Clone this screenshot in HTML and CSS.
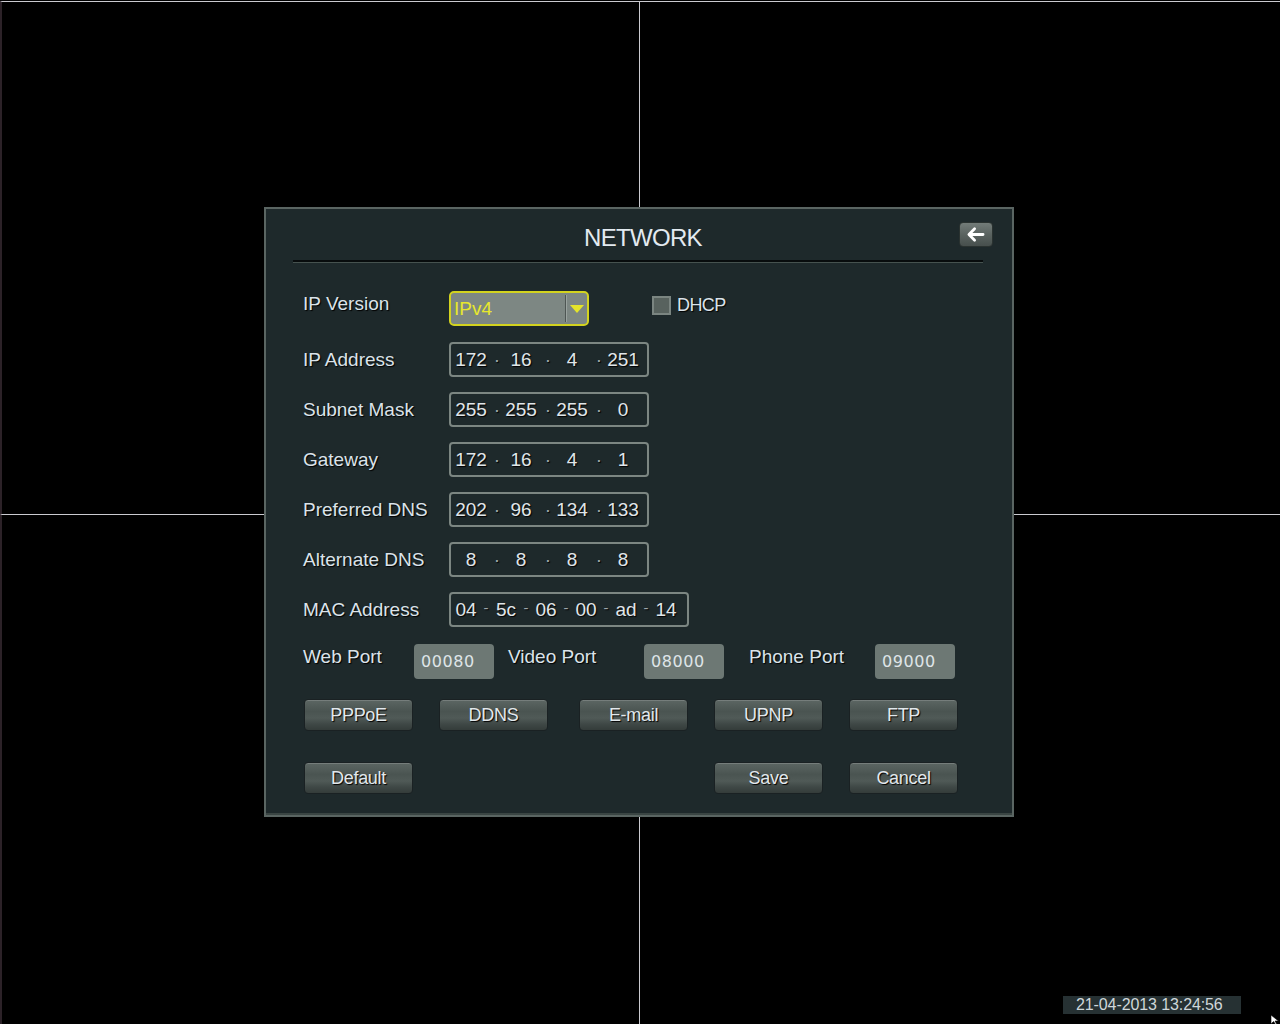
FILE: index.html
```html
<!DOCTYPE html>
<html>
<head>
<meta charset="utf-8">
<title>Network</title>
<link rel="stylesheet" href="styles.css">
</head>
<body>
<div class="screen">
  <div class="cell cell-left"></div>
  <div class="cell"></div>
  <div class="cell cell-left"></div>
  <div class="cell"></div>
</div>

<div class="dialog">
  <div class="dlg-head">
    <span></span>
    <h1 class="dlg-title">NETWORK</h1>
    <button class="back-btn" type="button">
      <svg width="34" height="25" viewBox="0 0 34 25"><path d="M15.5 6.5 L9.5 12.5 L15.5 18.5 M10 12.5 H24.5" fill="none" stroke="#ffffff" stroke-width="3" stroke-linejoin="round" stroke-linecap="round"/></svg>
    </button>
  </div>
  <div class="dlg-sep"></div>
  <div class="dlg-body">
    <div class="form">
      <div class="row row-top">
        <span class="label">IP Version</span>
        <div class="select">
          <span class="select-val">IPv4</span>
          <span class="select-arrow"><svg width="14" height="8" viewBox="0 0 14 8"><path d="M0 0 H14 L7 8 Z" fill="#e4e42a"/></svg></span>
        </div>
        <div class="check"><span class="check-box"></span><span class="check-text">DHCP</span></div>
      </div>
      <div class="row">
        <span class="label">IP Address</span>
        <div class="ipbox"><span class="seg seg-first">172</span><span class="dot">·</span><span class="seg">16</span><span class="dot">·</span><span class="seg">4</span><span class="dot">·</span><span class="seg">251</span></div>
      </div>
      <div class="row">
        <span class="label">Subnet Mask</span>
        <div class="ipbox"><span class="seg seg-first">255</span><span class="dot">·</span><span class="seg">255</span><span class="dot">·</span><span class="seg">255</span><span class="dot">·</span><span class="seg">0</span></div>
      </div>
      <div class="row">
        <span class="label">Gateway</span>
        <div class="ipbox"><span class="seg seg-first">172</span><span class="dot">·</span><span class="seg">16</span><span class="dot">·</span><span class="seg">4</span><span class="dot">·</span><span class="seg">1</span></div>
      </div>
      <div class="row">
        <span class="label">Preferred DNS</span>
        <div class="ipbox"><span class="seg seg-first">202</span><span class="dot">·</span><span class="seg">96</span><span class="dot">·</span><span class="seg">134</span><span class="dot">·</span><span class="seg">133</span></div>
      </div>
      <div class="row">
        <span class="label">Alternate DNS</span>
        <div class="ipbox"><span class="seg seg-first">8</span><span class="dot">·</span><span class="seg">8</span><span class="dot">·</span><span class="seg">8</span><span class="dot">·</span><span class="seg">8</span></div>
      </div>
      <div class="row">
        <span class="label">MAC Address</span>
        <div class="ipbox macbox"><span class="mseg">04</span><span class="dash">-</span><span class="mseg">5c</span><span class="dash">-</span><span class="mseg">06</span><span class="dash">-</span><span class="mseg">00</span><span class="dash">-</span><span class="mseg">ad</span><span class="dash">-</span><span class="mseg">14</span></div>
      </div>
    </div>

    <div class="ports">
      <span class="plabel plabel-web">Web Port</span>
      <span class="pinput">00080</span>
      <span class="plabel plabel-video">Video Port</span>
      <span class="pinput">08000</span>
      <span class="plabel plabel-phone">Phone Port</span>
      <span class="pinput">09000</span>
    </div>

    <div class="btn-row">
      <button class="btn" type="button">PPPoE</button>
      <button class="btn btn-ddns" type="button">DDNS</button>
      <button class="btn btn-email" type="button">E-mail</button>
      <button class="btn btn-gap" type="button">UPNP</button>
      <button class="btn btn-gap" type="button">FTP</button>
    </div>

    <div class="btn-row btn-row-bottom">
      <button class="btn" type="button">Default</button>
      <button class="btn btn-save" type="button">Save</button>
      <button class="btn btn-gap" type="button">Cancel</button>
    </div>
  </div>
</div>

<div class="clock">21-04-2013 13:24:56</div>
<svg class="cursor" width="10" height="10" viewBox="0 0 10 10"><path d="M0 0 L0 9 L2.5 6.5 L5 10 L6 9.5 L4 6 L7.5 6 Z" fill="#ffffff" stroke="#000" stroke-width="0.6"/></svg>
</body>
</html>
```

FILE: styles.css
```css
html, body {
  margin: 0;
  padding: 0;
}

body {
  background: #000;
  width: 1280px;
  height: 1024px;
  overflow: hidden;
  position: relative;
  font-family: "Liberation Sans", Arial, sans-serif;
}

.screen {
  display: grid;
  grid-template-columns: 639px 641px;
  grid-template-rows: 513px 511px;
  padding-top: 1px;
  box-sizing: border-box;
  height: 1024px;
}

.cell {
  box-sizing: border-box;
  border-top: 1px solid #cacad0;
  border-left: 1px solid #cacad0;
}

.cell-left {
  border-left: 2px solid #2c2228;
}

.dialog {
  position: absolute;
  left: 264px;
  top: 207px;
  width: 750px;
  height: 610px;
  box-sizing: border-box;
  border: 2px solid #5a6562;
  background: #1e292b;
  box-shadow: inset 0 -2px 0 #3a4543;
}

.dlg-head {
  display: grid;
  grid-template-columns: 1fr auto 1fr;
  align-items: start;
  height: 51px;
  box-sizing: border-box;
  padding: 13px 19px 7px 27px;
}

.dlg-title {
  margin: 1px 0 0 0;
  font-size: 24px;
  font-weight: normal;
  line-height: 30px;
  letter-spacing: -0.7px;
  color: #e3eaf0;
}

.back-btn {
  justify-self: end;
  width: 34px;
  height: 25px;
  padding: 0;
  border: 1px solid #2a3230;
  border-radius: 4px;
  background: linear-gradient(to bottom, #737c79 0%, #5a6360 50%, #474f4d 100%);
  display: flex;
  align-items: center;
  justify-content: center;
}

.back-btn svg {
  display: block;
}

.dlg-sep {
  height: 0;
  margin: 0 29px 0 27px;
  border-top: 2px solid #080c0d;
  border-bottom: 1px solid #46524f;
}

.dlg-body {
  padding: 28px 0 0 37px;
}

.form {
  display: flex;
  flex-direction: column;
  gap: 15px;
}

.row {
  display: flex;
  align-items: center;
  height: 35px;
}

.row-top {
  align-items: flex-start;
  margin-bottom: 1px;
}

.label {
  width: 146px;
  flex-shrink: 0;
  font-size: 19px;
  color: #dbe3ea;
  text-shadow: 1px 1px 1px #000;
}

.row-top .label {
  line-height: 26px;
}

.select {
  width: 140px;
  height: 35px;
  box-sizing: border-box;
  border: 2px solid #d3d31f;
  border-radius: 5px;
  background: #7d8783;
  display: flex;
}

.select-val {
  flex: 1;
  padding-left: 3px;
  font-size: 19px;
  line-height: 31px;
  color: #e7e72c;
}

.select-arrow {
  width: 21px;
  margin: 2px 0;
  border-left: 1px solid #4e5653;
  box-shadow: inset 1px 0 0 #9aa39f;
  display: flex;
  align-items: center;
  justify-content: center;
}

.select-arrow svg {
  display: block;
}

.check {
  margin-left: 63px;
  margin-top: 4px;
  display: flex;
  align-items: center;
  gap: 6px;
}

.check-box {
  width: 19px;
  height: 19px;
  box-sizing: border-box;
  border: 2px solid #7b8581;
  background: #58625e;
}

.check-text {
  font-size: 18px;
  letter-spacing: -0.6px;
  color: #dbe3ea;
  text-shadow: 1px 1px 1px #000;
}

.ipbox {
  width: 200px;
  height: 35px;
  box-sizing: border-box;
  border: 2px solid #7c8682;
  border-radius: 4px;
  display: flex;
  align-items: center;
  font-size: 19px;
  color: #e0e6ea;
  text-shadow: 1px 1px 1px #000;
}

.macbox {
  width: 240px;
}

.seg {
  width: 42px;
  text-align: center;
}

.seg-first {
  width: 40px;
}

.dot {
  width: 9px;
  text-align: right;
  color: #9ea7ab;
}

.mseg {
  width: 30px;
  text-align: center;
}

.dash {
  width: 10px;
  text-align: center;
  color: #9ea7ab;
  font-size: 15px;
  position: relative;
  top: -2px;
}

.ports {
  display: flex;
  align-items: flex-start;
  margin-top: 17px;
}

.plabel {
  flex-shrink: 0;
  font-size: 19px;
  line-height: 26px;
  color: #dbe3ea;
  text-shadow: 1px 1px 1px #000;
}

.plabel-web {
  width: 111px;
}

.plabel-video {
  width: 136px;
  margin-left: 14px;
}

.plabel-phone {
  width: 126px;
  margin-left: 25px;
}

.pinput {
  width: 80px;
  height: 35px;
  box-sizing: border-box;
  flex-shrink: 0;
  padding-left: 7px;
  border-radius: 4px;
  background: #6d7874;
  font-family: "DejaVu Sans", sans-serif;
  font-size: 16px;
  letter-spacing: 0.6px;
  line-height: 36px;
  color: #dfe5e8;
}

.btn-row {
  display: flex;
  margin-top: 20px;
}

.btn-row-bottom {
  margin-top: 31px;
}

.btn {
  width: 109px;
  height: 32px;
  box-sizing: border-box;
  margin: 0 0 0 1px;
  padding: 0;
  border: 1px solid #1a2123;
  border-radius: 4px;
  background: linear-gradient(to bottom, #5c6663 0%, #4a5451 38%, #505a57 60%, #3f4846 80%, #343c3a 100%);
  box-shadow: inset 0 1px 0 rgba(255, 255, 255, 0.16);
  font-family: "Liberation Sans", Arial, sans-serif;
  font-size: 18px;
  letter-spacing: -0.3px;
  color: #e2e8ec;
  text-shadow: 1px 1px 1px #000;
}

.btn-ddns {
  margin-left: 26px;
}

.btn-email {
  margin-left: 31px;
}

.btn-gap {
  margin-left: 26px;
}

.btn-save {
  margin-left: 301px;
}

.clock {
  position: absolute;
  left: 1063px;
  top: 996px;
  width: 178px;
  height: 18px;
  box-sizing: border-box;
  padding-left: 13px;
  background: #263133;
  font-size: 16px;
  line-height: 18px;
  letter-spacing: -0.1px;
  color: #cfd7da;
}

.cursor {
  position: absolute;
  left: 1271px;
  top: 1015px;
  display: block;
}
```
